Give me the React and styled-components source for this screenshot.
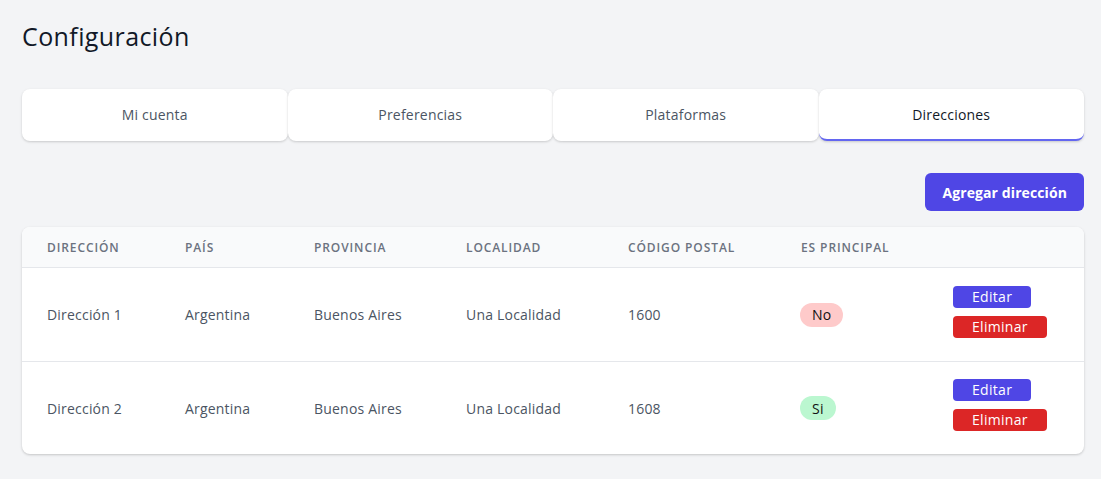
import React from "react";
import styled, { createGlobalStyle } from "styled-components";

const GlobalStyle = createGlobalStyle`
  * { box-sizing: border-box; }
  body {
    margin: 0;
    background: #f3f4f6;
    font-family: "Open Sans", "Liberation Sans", sans-serif;
  }
`;

const tabs = ["Mi cuenta", "Preferencias", "Plataformas", "Direcciones"];

const rows = [
  { dir: "Dirección 1", pais: "Argentina", prov: "Buenos Aires", loc: "Una Localidad", cp: "1600", main: false },
  { dir: "Dirección 2", pais: "Argentina", prov: "Buenos Aires", loc: "Una Localidad", cp: "1608", main: true },
];

const columns = "138px 129px 152px 162px 173px 152px 1fr";

const App = () => {
  return (
    <Page>
      <GlobalStyle />
      <Title>Configuración</Title>
      <TabBar>
        {tabs.map((t) => (
          <Tab key={t} $active={t === "Direcciones"}>
            {t}
          </Tab>
        ))}
      </TabBar>
      <Toolbar>
        <PrimaryButton>Agregar dirección</PrimaryButton>
      </Toolbar>
      <Card>
        <HeadRow>
          <HeadCell>Dirección</HeadCell>
          <HeadCell>País</HeadCell>
          <HeadCell>Provincia</HeadCell>
          <HeadCell>Localidad</HeadCell>
          <HeadCell>Código postal</HeadCell>
          <HeadCell>Es principal</HeadCell>
          <HeadCell />
        </HeadRow>
        {rows.map((r) => (
          <Row key={r.dir}>
            <Cell>{r.dir}</Cell>
            <Cell>{r.pais}</Cell>
            <Cell>{r.prov}</Cell>
            <Cell>{r.loc}</Cell>
            <Cell>{r.cp}</Cell>
            <Cell>
              <Badge $yes={r.main}>{r.main ? "Si" : "No"}</Badge>
            </Cell>
            <Actions>
              <SmallButton $color="#4f46e5">Editar</SmallButton>
              <SmallButton $color="#dc2626">Eliminar</SmallButton>
            </Actions>
          </Row>
        ))}
      </Card>
    </Page>
  );
};

export default App;

const Page = styled.div`
  padding: 20px 17px 24px 22px;
`;

const Title = styled.h1`
  margin: 0 0 37px;
  font-size: 25px;
  line-height: 32px;
  font-weight: 500;
  color: #111827;
  letter-spacing: 0.4px;
`;

const TabBar = styled.div`
  display: grid;
  grid-template-columns: repeat(4, 1fr);
  height: 52px;
`;

const Tab = styled.div`
  display: flex;
  align-items: center;
  justify-content: center;
  background: #fff;
  border-radius: 8px;
  box-shadow: 0 1px 3px rgba(0, 0, 0, 0.12), 0 1px 2px rgba(0, 0, 0, 0.06);
  font-size: 14px;
  font-weight: 500;
  letter-spacing: 0.2px;
  color: ${(p) => (p.$active ? "#111827" : "#4b5563")};
  border-bottom: 2px solid ${(p) => (p.$active ? "#6366f1" : "transparent")};
`;

const Toolbar = styled.div`
  display: flex;
  justify-content: flex-end;
  margin: 32px 0 16px;
`;

const PrimaryButton = styled.button`
  height: 38px;
  padding: 0 17px;
  border: none;
  border-radius: 6px;
  background: #4f46e5;
  color: #fff;
  font-family: inherit;
  font-size: 14px;
  font-weight: 700;
  letter-spacing: 0.1px;
`;

const Card = styled.div`
  background: #fff;
  border-radius: 8px;
  overflow: hidden;
  box-shadow: 0 1px 3px rgba(0, 0, 0, 0.14), 0 1px 2px rgba(0, 0, 0, 0.06);
`;

const HeadRow = styled.div`
  display: grid;
  grid-template-columns: ${columns};
  align-items: center;
  height: 41px;
  padding-left: 25px;
  background: #f9fafb;
  border-bottom: 1px solid #e5e7eb;
`;

const HeadCell = styled.div`
  font-size: 12px;
  font-weight: 600;
  text-transform: uppercase;
  letter-spacing: 0.9px;
  color: #6b7280;
`;

const Row = styled.div`
  display: grid;
  grid-template-columns: ${columns};
  align-items: center;
  height: 93px;
  padding-left: 25px;
  & + & {
    border-top: 1px solid #e5e7eb;
  }
`;

const Cell = styled.div`
  font-size: 14px;
  letter-spacing: 0.2px;
  color: #4b5563;
`;

const Badge = styled.span`
  display: inline-flex;
  align-items: center;
  height: 24px;
  padding: 0 12px;
  margin-left: -1px;
  border-radius: 999px;
  background: ${(p) => (p.$yes ? "#bbf7d0" : "#fecaca")};
  color: #111;
  font-size: 14px;
  font-weight: 500;
`;

const Actions = styled.div`
  display: flex;
  flex-direction: column;
  align-items: flex-start;
  gap: 8px;
  margin-bottom: 6px;
`;

const SmallButton = styled.button`
  height: 22px;
  padding: 0 19px;
  border: none;
  border-radius: 4px;
  background: ${(p) => p.$color};
  color: #fff;
  font-family: inherit;
  font-size: 14px;
  line-height: 22px;
  letter-spacing: 0.3px;
`;
